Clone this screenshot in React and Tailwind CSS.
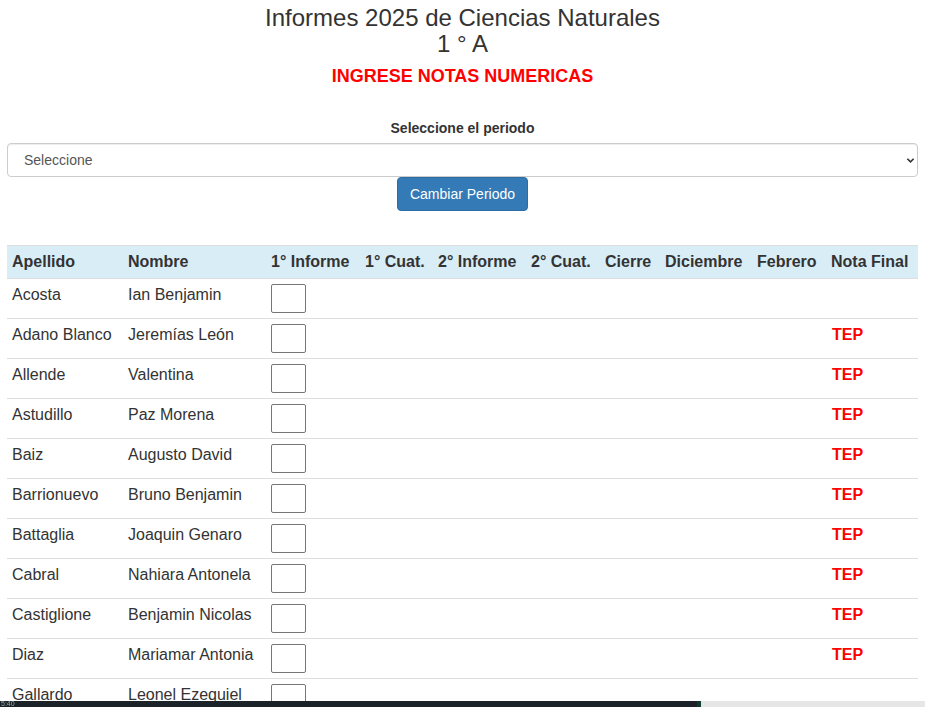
import React from 'react';

const alumnos = [
  { apellido: 'Acosta', nombre: 'Ian Benjamin', final: '' },
  { apellido: 'Adano Blanco', nombre: 'Jeremías León', final: 'TEP' },
  { apellido: 'Allende', nombre: 'Valentina', final: 'TEP' },
  { apellido: 'Astudillo', nombre: 'Paz Morena', final: 'TEP' },
  { apellido: 'Baiz', nombre: 'Augusto David', final: 'TEP' },
  { apellido: 'Barrionuevo', nombre: 'Bruno Benjamin', final: 'TEP' },
  { apellido: 'Battaglia', nombre: 'Joaquin Genaro', final: 'TEP' },
  { apellido: 'Cabral', nombre: 'Nahiara Antonela', final: 'TEP' },
  { apellido: 'Castiglione', nombre: 'Benjamin Nicolas', final: 'TEP' },
  { apellido: 'Diaz', nombre: 'Mariamar Antonia', final: 'TEP' },
  { apellido: 'Gallardo', nombre: 'Leonel Ezequiel', final: '' },
];

const columnas = [
  { label: 'Apellido', w: 'w-[116px]' },
  { label: 'Nombre', w: 'w-[143px]' },
  { label: '1° Informe', w: 'w-[94px]' },
  { label: '1° Cuat.', w: 'w-[73px]' },
  { label: '2° Informe', w: 'w-[93px]' },
  { label: '2° Cuat.', w: 'w-[74px]' },
  { label: 'Cierre', w: 'w-[60px]' },
  { label: 'Diciembre', w: 'w-[92px]' },
  { label: 'Febrero', w: 'w-[74px]' },
  { label: 'Nota Final', w: 'w-[92px]' },
];

const App = () => {
  return (
    <div className="min-h-screen bg-white text-[#333] font-['Liberation_Sans',Arial,sans-serif] overflow-hidden">
      <div className="px-[7px] pt-[5px]">
        <div className="text-center">
          <h2 className="text-[24px] leading-[26px] font-normal">
            Informes 2025 de Ciencias Naturales
            <br />
            1 ° A
          </h2>
          <h4 className="mt-[9px] text-[18px] leading-[20px] font-bold text-[#ff0000]">
            INGRESE NOTAS NUMERICAS
          </h4>
        </div>

        {/* selector de periodo */}
        <div className="mt-[32px] text-center">
          <label className="block text-[14px] leading-[20px] font-bold">Seleccione el periodo</label>
          <div className="relative mt-[5px]">
            <select className="w-full h-[34px] appearance-none rounded-[4px] border border-[#ccc] bg-white pl-[16px] text-[14px] text-[#555] shadow-[inset_0_1px_1px_rgba(0,0,0,0.075)] outline-none">
              <option>Seleccione</option>
            </select>
            <svg className="absolute right-[3px] top-[13px] h-[9px] w-[9px] pointer-events-none" viewBox="0 0 10 10">
              <path d="M1.5 3 L5 6.5 L8.5 3" fill="none" stroke="#333" strokeWidth="1.8" />
            </svg>
          </div>
          <button className="h-[34px] w-[131px] rounded-[4px] border border-[#2e6da4] bg-[#337ab7] text-[14px] text-white">
            Cambiar Periodo
          </button>
        </div>

        {/* tabla de notas */}
        <table className="mt-[34px] w-full border-collapse text-[16px] leading-[22px]">
          <thead>
            <tr className="bg-[#d9edf7]">
              {columnas.map((c) => (
                <th key={c.label} className={`${c.w} px-[5px] py-[5px] text-left font-bold whitespace-nowrap border-t border-[#ddd] border-b`}>
                  {c.label}
                </th>
              ))}
            </tr>
          </thead>
          <tbody>
            {alumnos.map((a) => (
              <tr key={a.apellido} className="h-[40px] border-b border-[#ddd]">
                <td className="px-[5px] pt-[5px] align-top whitespace-nowrap">{a.apellido}</td>
                <td className="px-[5px] pt-[5px] align-top whitespace-nowrap">{a.nombre}</td>
                <td className="px-[5px] pt-[5px] align-top">
                  <input type="text" className="block h-[29px] w-[35px] rounded-[2px] border border-[#767676] bg-white" />
                </td>
                <td />
                <td />
                <td />
                <td />
                <td />
                <td />
                <td className="px-[6px] pt-[5px] align-top font-bold text-[#ff0000]">{a.final}</td>
              </tr>
            ))}
          </tbody>
        </table>
      </div>

      {/* franja inferior */}
      <div className="fixed bottom-0 left-0 right-0 flex h-[6px]">
        <div className="w-[697px] bg-[#1b2228] text-[7px] leading-[6px] text-[#9aa] pl-[1px]">5:40</div>
        <div className="w-[4px] bg-[#0e3b2e]" />
        <div className="flex-1 bg-[#e6e6e6]" />
      </div>
    </div>
  );
};

export default App;
